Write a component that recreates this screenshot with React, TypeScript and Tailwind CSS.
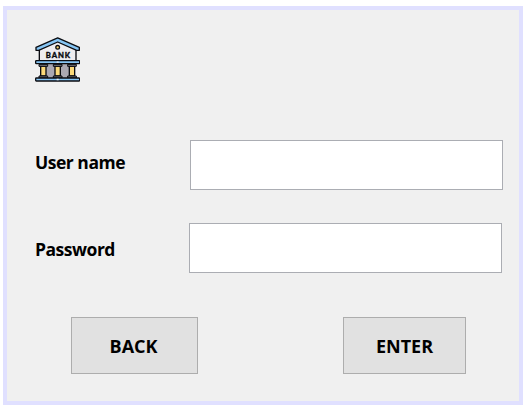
import React from "react";

function BankLogo() {
  return (
    <svg
      width="45"
      height="45"
      viewBox="15 15 135 135"
      role="img"
      aria-label="Bank"
      stroke="#0b0d12"
      strokeWidth="4"
      strokeLinejoin="round"
    >
      <path d="M28 51 L83 26 L138 51 V88 H28Z" fill="#eeedf0" />
      <path d="M83 17.5 L148 46 V55 H140 L83 30 L26 55 H18 V46Z" fill="#86c5f4" />
      <circle cx="83" cy="46" r="5.5" fill="#f6d06b" />
      <rect x="40" y="94" width="86" height="44" fill="#aaa8b2" stroke="none" />
      <path d="M32 102H48V132H32Z M75 102H91V132H75Z M118 102H134V132H118Z" fill="#fbd979" />
      <path
        d="M27 97H53V103H27Z M70 97H96V103H70Z M113 97H139V103H113Z M27 132H53V138H27Z M70 132H96V138H70Z M113 132H139V138H113Z"
        fill="#77767d"
        strokeWidth="3"
      />
      <rect x="17" y="86" width="132" height="9" rx="2" fill="#86c5f4" />
      <rect x="17" y="138" width="132" height="9" rx="2" fill="#86c5f4" />
      <path d="M80 90.500H86 M80 142.500H86" stroke="#eeedf0" strokeWidth="4" />
      <text
        x="84"
        y="78"
        textAnchor="middle"
        textLength="73"
        fontFamily="Lato, sans-serif"
        fontSize="23"
        fontWeight="900"
        fill="#0b0d12"
        stroke="#0b0d12"
        strokeWidth="1"
      >
        BANK
      </text>
    </svg>
  );
}

const buttonStyle =
  "h-[57px] border border-[#adadad] bg-[#e1e1e1] text-[18px] leading-none font-bold";

export default function App() {
  return (
    <main className="h-[414px] w-[525px] bg-white pt-1.5 pl-[3px] font-['Open_Sans','Noto_Sans',sans-serif] text-black">
      <form
        className="flex h-[399px] w-[520px] flex-col border-4 border-[#e0e0ff] bg-[#f0f0f0] pt-[27px] pl-7"
        onSubmit={(event) => event.preventDefault()}
      >
        <BankLogo />
        <div className="mt-[58px] flex h-[50px] items-center">
          <label htmlFor="user" className="w-[155px] pb-1 text-[17.5px] leading-none font-bold">
            <span className="tracking-[-0.48px]">User name</span>
          </label>
          <input id="user" className="h-[50px] w-[313px] border border-[#abadb3] bg-white px-2" />
        </div>
        <div className="mt-[33px] flex h-[50px] items-center">
          <label htmlFor="password" className="w-[154px] pt-1 text-[17.5px] leading-none font-bold">
            <span className="tracking-[-0.48px]">Password</span>
          </label>
          <input
            id="password"
            type="password"
            className="h-[50px] w-[313px] border border-[#abadb3] bg-white px-2"
          />
        </div>
        <div className="mt-11 flex gap-[145px] pl-9">
          <button type="button" className={`${buttonStyle} w-[127px] pr-0.5`}>
            BACK
          </button>
          <button type="submit" className={`${buttonStyle} w-[123px]`}>
            ENTER
          </button>
        </div>
      </form>
    </main>
  );
}
